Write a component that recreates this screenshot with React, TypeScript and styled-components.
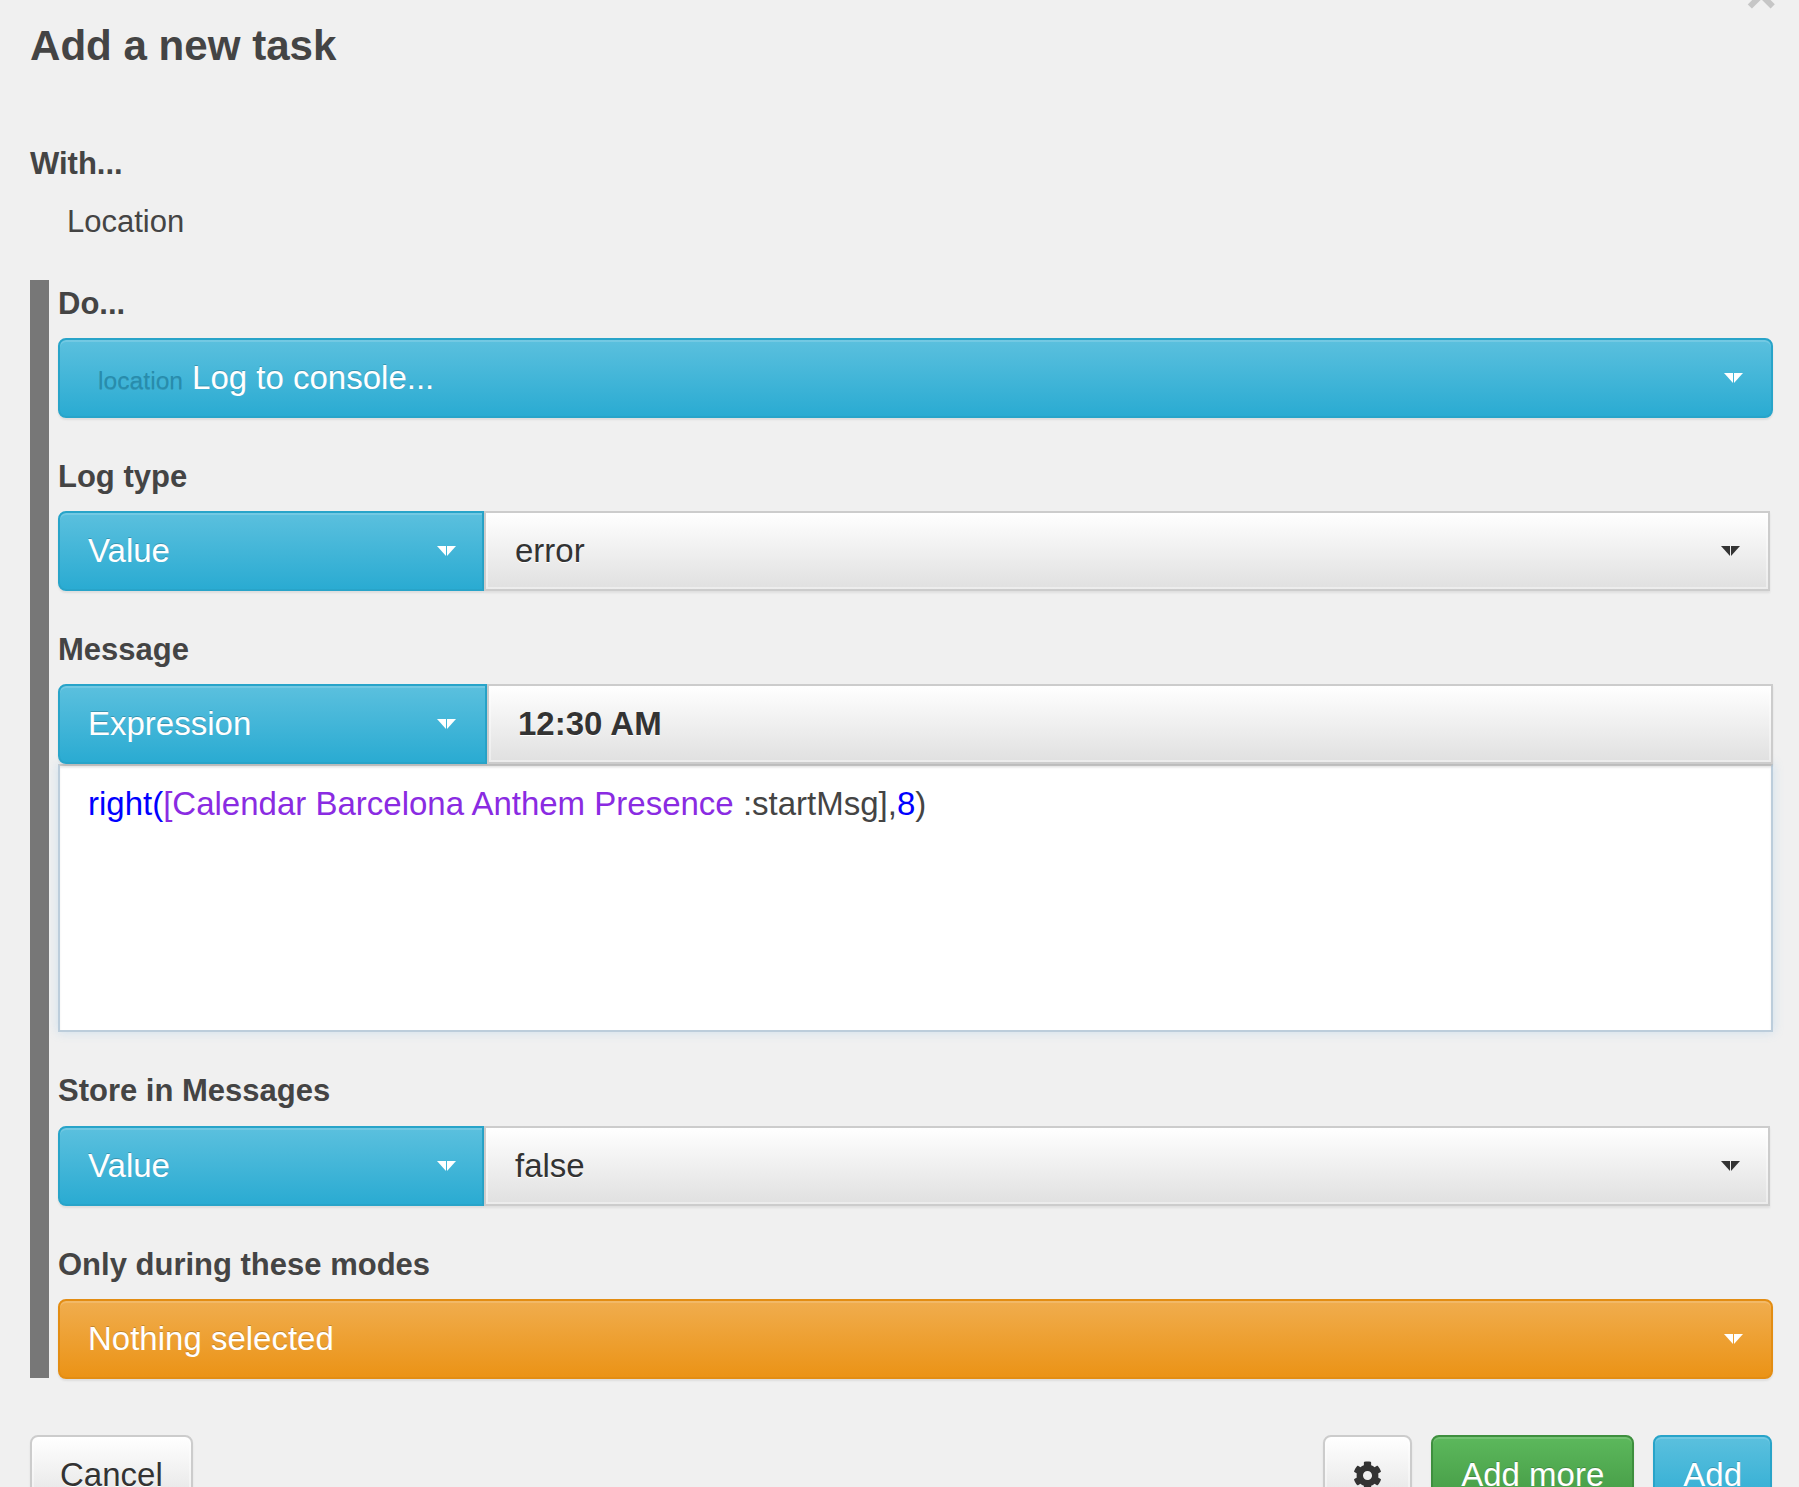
import React from "react";
import styled, { createGlobalStyle, css } from "styled-components";
import { FaCog } from "react-icons/fa";

const GlobalStyle = createGlobalStyle`
  html, body {
    margin: 0;
    height: 1487px;
    overflow: hidden;
    background: #f0f0f0;
  }
  body {
    font-family: "Liberation Sans", Arial, sans-serif;
    color: #444;
  }
`;

type Tone = "info" | "warning" | "success" | "plain";

const tones = {
  info: css`
    background: linear-gradient(to bottom, #5bc0de 0%, #2aabd2 100%);
    border-color: #28a4c9;
    color: #fff;
    text-shadow: 0 -1px 0 rgba(0, 0, 0, 0.2);
    box-shadow: inset 0 2px 0 rgba(255, 255, 255, 0.15), 0 2px 2px rgba(0, 0, 0, 0.075);
  `,
  warning: css`
    background: linear-gradient(to bottom, #f0ad4e 0%, #eb9316 100%);
    border-color: #e38d13;
    color: #fff;
    text-shadow: 0 -1px 0 rgba(0, 0, 0, 0.2);
    box-shadow: inset 0 2px 0 rgba(255, 255, 255, 0.15), 0 2px 2px rgba(0, 0, 0, 0.075);
  `,
  success: css`
    background: linear-gradient(to bottom, #5cb85c 0%, #419641 100%);
    border-color: #3e8f3e;
    color: #fff;
    text-shadow: 0 -1px 0 rgba(0, 0, 0, 0.2);
    box-shadow: inset 0 2px 0 rgba(255, 255, 255, 0.15), 0 2px 2px rgba(0, 0, 0, 0.075);
  `,
  plain: css`
    background: linear-gradient(to bottom, #fff 0%, #e0e0e0 100%);
    border-color: #ccc;
    color: #333;
    text-shadow: 0 1px 0 #fff;
    box-shadow: inset 0 0 0 2px rgba(255, 255, 255, 0.4), 0 2px 2px rgba(0, 0, 0, 0.075);
  `,
};

const Page = styled.div`
  position: relative;
  box-sizing: border-box;
  height: 1487px;
  overflow: hidden;
  padding: 23px 26px 0 30px;
`;

const CloseMark = styled.span`
  position: absolute;
  top: -33px;
  right: 22px;
  font-size: 54px;
  font-weight: 700;
  line-height: 1;
  color: #c6c6c6;
`;

const Heading = styled.h3`
  margin: 0 0 77px;
  font-size: 42.1px;
  font-weight: 700;
  line-height: 46px;
`;

const Label = styled.label<{ $gap?: number }>`
  display: block;
  margin-bottom: ${(p) => p.$gap ?? 17}px;
  font-size: 31px;
  font-weight: 700;
  line-height: 36px;
`;

const WithList = styled.div`
  margin: -13px 0 40px;
  padding: 18px 0 0 37px;
  font-size: 31px;
  line-height: 36px;
`;

const Actions = styled.section`
  box-sizing: border-box;
  height: 1098px;
  padding: 6px 0 0 9px;
  border-left: 19px solid #777;
`;

const Field = styled.div`
  margin-bottom: 41px;

  &:last-child {
    margin-bottom: 0;
  }
`;

const SelectBox = styled.div<{ $tone: Tone; $width?: number; $group?: "left" | "right" }>`
  display: flex;
  align-items: center;
  justify-content: space-between;
  box-sizing: border-box;
  flex: ${(p) => (p.$width ? `0 0 ${p.$width}px` : "1 1 auto")};
  height: 80px;
  padding: 0 ${(p) => (p.$width ? p.$width - 400 : 28)}px 0 ${(p) => (p.$group === "right" ? 29 : 28)}px;
  border: 2px solid;
  border-radius: 8px;
  font-size: 33px;
  ${(p) => tones[p.$tone]}
  ${(p) =>
    p.$group === "left" &&
    css`
      border-top-right-radius: 0;
      border-bottom-right-radius: 0;
    `}
  ${(p) =>
    p.$group === "right" &&
    css`
      border-radius: 0;
    `}
`;

const SelectText = styled.span`
  display: flex;
  align-items: baseline;
  gap: 9px;
`;

const Module = styled.span`
  margin-left: 10px;
  font-size: 24.7px;
  color: #288cac;
  text-shadow: 0 1px 0 rgba(0, 0, 0, 0.12);
`;

const Row = styled.div<{ $inset?: number }>`
  display: flex;
  margin-right: ${(p) => p.$inset ?? 0}px;
`;

const Strong = styled.strong`
  font-weight: 700;
`;

const CodeBox = styled.div`
  box-sizing: border-box;
  height: 268px;
  padding: 20px 28px;
  background: #fff;
  border: 2px solid #bccddb;
  border-top-color: #c9c9c9;
  box-shadow: inset 0 2px 2px rgba(0, 0, 0, 0.075), 0 0 10px rgba(102, 175, 233, 0.25);
  font-size: 33px;
  line-height: 36px;
  color: #444;
`;

const Fn = styled.span`
  color: #00f;
`;

const Device = styled.span`
  color: #8a2be2;
`;

const Footer = styled.div`
  display: flex;
  align-items: flex-start;
  justify-content: space-between;
  margin: 57px 1px 0 0;
`;

const FooterRight = styled.div`
  display: flex;
  gap: 19px;
`;

const Button = styled.button<{ $tone: Tone }>`
  box-sizing: border-box;
  height: 80px;
  padding: 0 28px;
  border: 2px solid;
  border-radius: 8px;
  font-family: inherit;
  font-size: 33px;
  ${(p) => tones[p.$tone]}

  svg {
    display: block;
    width: 29px;
    height: 29px;
  }
`;

const Caret: React.FC<{ color?: string }> = ({ color = "#fff" }) => (
  <svg width="19" height="10" viewBox="0 0 19 10" aria-hidden="true">
    <polygon points="0,0 9,0 9,10" fill={color} />
    <polygon points="10,0 19,0 10,10" fill={color} />
  </svg>
);

const App: React.FC = () => (
  <Page>
    <GlobalStyle />
    <CloseMark>×</CloseMark>
    <Heading>Add a new task</Heading>
    <Label>With...</Label>
    <WithList>Location</WithList>
    <Actions>
      <Field>
        <Label $gap={16}>Do...</Label>
        <SelectBox $tone="info">
          <SelectText>
            <Module>location</Module>
            Log to console...
          </SelectText>
          <Caret />
        </SelectBox>
      </Field>
      <Field>
        <Label $gap={16}>Log type</Label>
        <Row $inset={3}>
          <SelectBox $tone="info" $width={426} $group="left">
            Value
            <Caret />
          </SelectBox>
          <SelectBox $tone="plain" $group="right">
            error
            <Caret color="#333" />
          </SelectBox>
        </Row>
      </Field>
      <Field>
        <Label $gap={16}>Message</Label>
        <Row>
          <SelectBox $tone="info" $width={429} $group="left">
            Expression
            <Caret />
          </SelectBox>
          <SelectBox $tone="plain" $group="right">
            <Strong>12:30 AM</Strong>
          </SelectBox>
        </Row>
        <CodeBox>
          <Fn>right(</Fn>
          <Device>[Calendar Barcelona Anthem Presence </Device>
          :startMsg],
          <Fn>8</Fn>)
        </CodeBox>
      </Field>
      <Field>
        <Label>Store in Messages</Label>
        <Row $inset={3}>
          <SelectBox $tone="info" $width={426} $group="left">
            Value
            <Caret />
          </SelectBox>
          <SelectBox $tone="plain" $group="right">
            false
            <Caret color="#333" />
          </SelectBox>
        </Row>
      </Field>
      <Field>
        <Label $gap={16}>Only during these modes</Label>
        <SelectBox $tone="warning">
          Nothing selected
          <Caret />
        </SelectBox>
      </Field>
    </Actions>
    <Footer>
      <Button $tone="plain">Cancel</Button>
      <FooterRight>
        <Button $tone="plain" aria-label="Options">
          <FaCog />
        </Button>
        <Button $tone="success">Add more</Button>
        <Button $tone="info">Add</Button>
      </FooterRight>
    </Footer>
  </Page>
);

export default App;
